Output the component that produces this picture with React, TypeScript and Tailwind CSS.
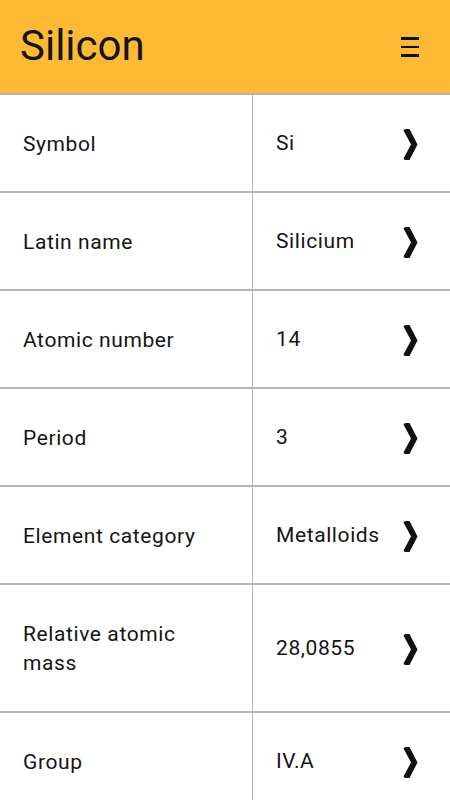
const rows: { label: string[]; value: string; tall?: boolean }[] = [
  { label: ['Symbol'], value: 'Si' },
  { label: ['Latin name'], value: 'Silicium' },
  { label: ['Atomic number'], value: '14' },
  { label: ['Period'], value: '3' },
  { label: ['Element category'], value: 'Metalloids' },
  { label: ['Relative atomic', 'mass'], value: '28,0855', tall: true },
  { label: ['Group'], value: 'IV.A' },
];

const Chevron = () => (
  <svg width="15" height="31" viewBox="0 0 15 31" className="shrink-0">
    <path d="M0.5 1.5 Q1 0 3 0 L6.5 0 L14.5 15.5 L6.5 31 L3 31 Q1 31 0.5 29.5 L8 15.5 Z" fill="#111" />
  </svg>
);

const App = () => {
  return (
    <div className="w-[450px] h-[800px] overflow-hidden bg-white text-[#141414] font-['Roboto',sans-serif]">
      <header className="h-[95px] bg-[#ffba35] border-b-2 border-[#b2b2b2] flex items-center justify-between pl-[20px] pr-[31px]">
        <h1 className="text-[42px] leading-none pb-[1px]">Silicon</h1>
        <div className="flex flex-col gap-[6px] w-[18px] mt-[1px]">
          <span className="h-[2.5px] bg-[#111]" />
          <span className="h-[2.5px] bg-[#111]" />
          <span className="h-[2.5px] bg-[#111]" />
        </div>
      </header>

      {rows.map((r) => (
        <div
          key={r.value}
          className={`grid grid-cols-[253px_1fr] border-b-2 border-[#b5b5b5] text-[21px] tracking-[0.6px] ${r.tall ? 'h-[128px]' : 'h-[98px]'}`}
        >
          <div className="border-r border-[#b5b5b5] flex items-center pl-[23px] leading-[29px] pt-[2px]">
            <div>
              {r.label.map((l) => (
                <div key={l}>{l}</div>
              ))}
            </div>
          </div>
          <div className="flex items-center justify-between pl-[23px] pr-[32px] pt-[2px]">
            <span>{r.value}</span>
            <Chevron />
          </div>
        </div>
      ))}
    </div>
  );
};

export default App;
